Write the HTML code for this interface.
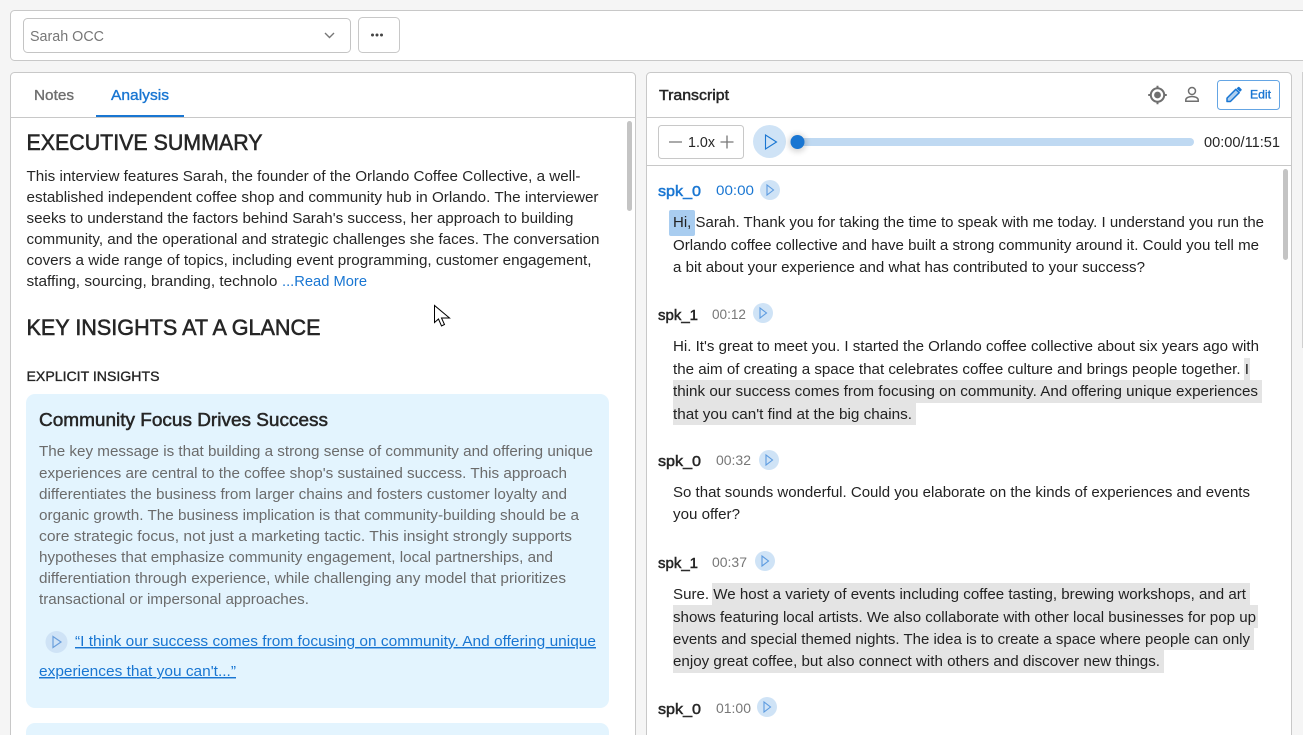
<!DOCTYPE html>
<html lang="en"><head><meta charset="utf-8"><title>Transcript</title>
<style>
html,body{margin:0;padding:0;width:1303px;height:735px;overflow:hidden;background:#f5f5f5}
svg{display:block;position:absolute;left:0;top:0}
text{font-family:"Liberation Sans",Arial,sans-serif;white-space:pre}
.b{font-size:14.6px;fill:#262626}
.g{font-size:14.6px;fill:#6b6b6b}
.t{font-size:14.6px;fill:#222}
.l{font-size:14.6px;fill:#1976d2}
.h{font-size:22px;fill:#262626;stroke:#262626;stroke-width:.55px}
.s{font-size:15px;fill:#262626;stroke:#262626;stroke-width:.5px}
.tm{font-size:14px;fill:#777}
.m{font-size:14.5px;stroke-width:.35px}
</style></head><body>
<svg width="1303" height="735" viewBox="0 0 1303 735" xmlns="http://www.w3.org/2000/svg">
<defs><filter id="sh" x="-100%" y="-100%" width="300%" height="300%"><feGaussianBlur stdDeviation="3"/></filter></defs>
<!-- top bar -->
<rect x="10.5" y="10.5" width="1310" height="50" rx="4" fill="#fff" stroke="#c8c8c8"/>
<rect x="23.5" y="18.5" width="327" height="34" rx="4" fill="#fff" stroke="#c4c4c4"/>
<text x="30" y="41" font-size="14.5" fill="#777" textLength="74" lengthAdjust="spacingAndGlyphs">Sarah OCC</text>
<path d="M325 33l4.500 4.500 4.500-4.500" fill="none" stroke="#777" stroke-width="1.400"/>
<rect x="358.500" y="17.500" width="41" height="35" rx="4" fill="#fff" stroke="#c8c8c8"/>
<g fill="#444"><circle cx="372.500" cy="35" r="1.500"/><circle cx="377" cy="35" r="1.500"/><circle cx="381.500" cy="35" r="1.500"/></g>

<!-- left panel -->
<rect x="10.500" y="72.500" width="625" height="680" rx="4" fill="#fff" stroke="#c8c8c8"/>
<line x1="11" y1="117.500" x2="635" y2="117.500" stroke="#c8c8c8"/>
<text x="34" y="100" class="m" fill="#6e6e6e" stroke="#6e6e6e" textLength="40" lengthAdjust="spacingAndGlyphs">Notes</text>
<text x="111" y="100" class="m" fill="#1976d2" stroke="#1976d2" textLength="58" lengthAdjust="spacingAndGlyphs">Analysis</text>
<rect x="96" y="115" width="88" height="2" fill="#1976d2"/>
<rect x="627" y="121" width="5" height="90" rx="2.500" fill="#c4c4c4"/>

<text x="26.500" y="150" class="h" textLength="236" lengthAdjust="spacingAndGlyphs">EXECUTIVE SUMMARY</text>
<text x="26.500" y="181" class="b" textLength="554" lengthAdjust="spacingAndGlyphs">This interview features Sarah, the founder of the Orlando Coffee Collective, a well-</text>
<text x="26.500" y="202" class="b" textLength="572" lengthAdjust="spacingAndGlyphs">established independent coffee shop and community hub in Orlando. The interviewer</text>
<text x="26.500" y="223" class="b" textLength="547" lengthAdjust="spacingAndGlyphs">seeks to understand the factors behind Sarah's success, her approach to building</text>
<text x="26.500" y="244" class="b" textLength="573" lengthAdjust="spacingAndGlyphs">community, and the operational and strategic challenges she faces. The conversation</text>
<text x="26.500" y="265" class="b" textLength="565" lengthAdjust="spacingAndGlyphs">covers a wide range of topics, including event programming, customer engagement,</text>
<text x="26.500" y="286" class="b" textLength="251" lengthAdjust="spacingAndGlyphs">staffing, sourcing, branding, technolo</text>
<text x="282" y="286" class="l" textLength="85" lengthAdjust="spacingAndGlyphs">...Read More</text>

<text x="26.500" y="335" class="h" textLength="294" lengthAdjust="spacingAndGlyphs">KEY INSIGHTS AT A GLANCE</text>
<text x="26.500" y="381" font-size="14" fill="#262626" stroke="#262626" stroke-width=".35" textLength="133" lengthAdjust="spacingAndGlyphs">EXPLICIT INSIGHTS</text>

<rect x="26" y="394" width="583" height="314" rx="9" fill="#e3f4fe"/>
<rect x="26" y="723" width="583" height="40" rx="9" fill="#e3f4fe"/>
<text x="39" y="426" font-size="18" fill="#262626" stroke="#262626" stroke-width=".5" textLength="289" lengthAdjust="spacingAndGlyphs">Community Focus Drives Success</text>
<text x="39" y="456" class="g" textLength="554" lengthAdjust="spacingAndGlyphs">The key message is that building a strong sense of community and offering unique</text>
<text x="39" y="478" class="g" textLength="528" lengthAdjust="spacingAndGlyphs">experiences are central to the coffee shop's sustained success. This approach</text>
<text x="39" y="499" class="g" textLength="528" lengthAdjust="spacingAndGlyphs">differentiates the business from larger chains and fosters customer loyalty and</text>
<text x="39" y="520" class="g" textLength="540" lengthAdjust="spacingAndGlyphs">organic growth. The business implication is that community-building should be a</text>
<text x="39" y="541" class="g" textLength="533" lengthAdjust="spacingAndGlyphs">core strategic focus, not just a marketing tactic. This insight strongly supports</text>
<text x="39" y="562" class="g" textLength="514" lengthAdjust="spacingAndGlyphs">hypotheses that emphasize community engagement, local partnerships, and</text>
<text x="39" y="583" class="g" textLength="527" lengthAdjust="spacingAndGlyphs">differentiation through experience, while challenging any model that prioritizes</text>
<text x="39" y="604" class="g" textLength="270" lengthAdjust="spacingAndGlyphs">transactional or impersonal approaches.</text>

<ellipse cx="56.500" cy="642" rx="11" ry="11" fill="#cfe3f6"/>
<path d="M53 636.500v11l8-5.500z" fill="none" stroke="#6a9fdc" stroke-width="1.200"/>
<text x="75" y="646" class="l" text-decoration="underline" textLength="521" lengthAdjust="spacingAndGlyphs">“I think our success comes from focusing on community. And offering unique</text>
<text x="39" y="676" class="l" text-decoration="underline" textLength="197" lengthAdjust="spacingAndGlyphs">experiences that you can't...”</text>

<!-- cursor -->
<path d="M434.500 305.500v17l4-3.500 3 7 3-1.500-3-6.500h8z" fill="#fff" stroke="#000" stroke-width="1"/>

<!-- right panel -->
<rect x="646.500" y="72.500" width="645" height="680" rx="4" fill="#fff" stroke="#c8c8c8"/>
<line x1="647" y1="117.500" x2="1291" y2="117.500" stroke="#c8c8c8"/>
<line x1="647" y1="165.500" x2="1291" y2="165.500" stroke="#c8c8c8"/>
<rect x="1302" y="72" width="1" height="276" fill="#d0d0d0"/>
<text x="659" y="100" class="m" fill="#262626" stroke="#262626" style="stroke-width:.45px" textLength="70" lengthAdjust="spacingAndGlyphs">Transcript</text>

<!-- target icon -->
<g fill="none" stroke="#6f6f6f" stroke-width="2">
<circle cx="1157.500" cy="95" r="6.700"/>
<path d="M1157.500 85.700v2.500M1157.500 101.800v2.500M1148.200 95h2.500M1164.300 95h2.500"/>
</g>
<circle cx="1157.500" cy="95" r="3.400" fill="#6f6f6f"/>
<!-- person icon -->
<g fill="none" stroke="#6f6f6f" stroke-width="1.500">
<circle cx="1192" cy="91" r="3.500"/>
<path d="M1185.800 101.300v-1.500c0-2.100 3.700-3.300 6.200-3.300s6.200 1.200 6.200 3.300v1.500z"/>
</g>
<!-- edit button -->
<rect x="1217.500" y="80.500" width="62" height="29" rx="3" fill="#fff" stroke="#64a5e4"/>
<path d="M1227 101.500v-3.400l8.800-8.800 3.400 3.400-8.800 8.800z" fill="#1976d2" fill-opacity=".35" stroke="#1976d2" stroke-width="1.500" stroke-linejoin="round"/>
<path d="M1236.600 88.500l1.400-1.400a1 1 0 0 1 1.400 0l2 2a1 1 0 0 1 0 1.400l-1.400 1.400z" fill="#1976d2"/>
<text x="1250" y="98.500" font-size="12" fill="#1976d2" stroke="#1976d2" stroke-width=".35" textLength="21" lengthAdjust="spacingAndGlyphs">Edit</text>

<!-- player -->
<rect x="658.500" y="125.500" width="85" height="33" rx="3" fill="#fff" stroke="#c8c8c8"/>
<path d="M669 142h13M720.500 142h13M727 135.500v13" stroke="#777" stroke-width="1.300" fill="none"/>
<text x="688" y="147" font-size="14.500" fill="#262626" textLength="27" lengthAdjust="spacingAndGlyphs">1.0x</text>
<circle cx="769.500" cy="141.500" r="16.500" fill="#cfe3f6"/>
<path d="M765.500 135v14l11-7z" fill="none" stroke="#1976d2" stroke-width="1.100"/>
<rect x="797" y="138" width="397" height="8" rx="4" fill="#bfd9f2"/>
<circle cx="797.500" cy="143" r="9" fill="#000" opacity=".16" filter="url(#sh)"/>
<circle cx="797.500" cy="142" r="7" fill="#1976d2"/>
<text x="1204" y="147" font-size="14.500" fill="#262626" textLength="76" lengthAdjust="spacingAndGlyphs">00:00/11:51</text>
<rect x="1283" y="169" width="5" height="91" rx="2.500" fill="#c4c4c4"/>

<!-- highlights -->
<rect x="669" y="210" width="26" height="26" rx="2" fill="#a9cdf0"/>
<rect x="1244" y="358" width="6" height="22" fill="#e4e4e4"/>
<rect x="673" y="380" width="589" height="23" fill="#e4e4e4"/>
<rect x="673" y="403" width="243" height="22" fill="#e4e4e4"/>
<rect x="712" y="583" width="538" height="22" fill="#e4e4e4"/>
<rect x="673" y="605" width="585" height="23" fill="#e4e4e4"/>
<rect x="673" y="628" width="581" height="22" fill="#e4e4e4"/>
<rect x="673" y="650" width="491" height="23" fill="#e4e4e4"/>

<!-- speaker 1 -->
<text x="658" y="196" class="s" style="fill:#1976d2;stroke:#1976d2" textLength="43" lengthAdjust="spacingAndGlyphs">spk_0</text>
<text x="716" y="195" class="tm" style="fill:#1976d2" textLength="38" lengthAdjust="spacingAndGlyphs">00:00</text>
<circle cx="770" cy="190" r="10" fill="#cfe3f6"/><path d="M767 185v10l6.500-5z" fill="none" stroke="#5c9be0" stroke-width="1.100"/>
<text x="673" y="227" class="t" textLength="591" lengthAdjust="spacingAndGlyphs">Hi, Sarah. Thank you for taking the time to speak with me today. I understand you run the</text>
<text x="673" y="250" class="t" textLength="586" lengthAdjust="spacingAndGlyphs">Orlando coffee collective and have built a strong community around it. Could you tell me</text>
<text x="673" y="272" class="t" textLength="472" lengthAdjust="spacingAndGlyphs">a bit about your experience and what has contributed to your success?</text>

<!-- speaker 2 -->
<text x="658" y="320" class="s" textLength="40" lengthAdjust="spacingAndGlyphs">spk_1</text>
<text x="712" y="319" class="tm" textLength="34" lengthAdjust="spacingAndGlyphs">00:12</text>
<circle cx="763" cy="313" r="10" fill="#cfe3f6"/><path d="M760 308v10l6.500-5z" fill="none" stroke="#5c9be0" stroke-width="1.100"/>
<text x="673" y="351" class="t" textLength="586" lengthAdjust="spacingAndGlyphs">Hi. It's great to meet you. I started the Orlando coffee collective about six years ago with</text>
<text x="673" y="374" class="t" textLength="576" lengthAdjust="spacingAndGlyphs">the aim of creating a space that celebrates coffee culture and brings people together. I</text>
<text x="673" y="396" class="t" textLength="585" lengthAdjust="spacingAndGlyphs">think our success comes from focusing on community. And offering unique experiences</text>
<text x="673" y="419" class="t" textLength="239" lengthAdjust="spacingAndGlyphs">that you can't find at the big chains.</text>

<!-- speaker 3 -->
<text x="658" y="466" class="s" textLength="43" lengthAdjust="spacingAndGlyphs">spk_0</text>
<text x="716" y="465" class="tm" textLength="35" lengthAdjust="spacingAndGlyphs">00:32</text>
<circle cx="769" cy="460" r="10" fill="#cfe3f6"/><path d="M766 455v10l6.500-5z" fill="none" stroke="#5c9be0" stroke-width="1.100"/>
<text x="673" y="497" class="t" textLength="577" lengthAdjust="spacingAndGlyphs">So that sounds wonderful. Could you elaborate on the kinds of experiences and events</text>
<text x="673" y="519" class="t" textLength="67" lengthAdjust="spacingAndGlyphs">you offer?</text>

<!-- speaker 4 -->
<text x="658" y="568" class="s" textLength="40" lengthAdjust="spacingAndGlyphs">spk_1</text>
<text x="712" y="567" class="tm" textLength="35" lengthAdjust="spacingAndGlyphs">00:37</text>
<circle cx="765" cy="561" r="10" fill="#cfe3f6"/><path d="M762 556v10l6.500-5z" fill="none" stroke="#5c9be0" stroke-width="1.100"/>
<text x="673" y="599" class="t" textLength="573" lengthAdjust="spacingAndGlyphs">Sure. We host a variety of events including coffee tasting, brewing workshops, and art</text>
<text x="673" y="622" class="t" textLength="583" lengthAdjust="spacingAndGlyphs">shows featuring local artists. We also collaborate with other local businesses for pop up</text>
<text x="673" y="644" class="t" textLength="577" lengthAdjust="spacingAndGlyphs">events and special themed nights. The idea is to create a space where people can only</text>
<text x="673" y="666" class="t" textLength="487" lengthAdjust="spacingAndGlyphs">enjoy great coffee, but also connect with others and discover new things.</text>

<!-- speaker 5 -->
<text x="658" y="714" class="s" textLength="43" lengthAdjust="spacingAndGlyphs">spk_0</text>
<text x="716" y="713" class="tm" textLength="35" lengthAdjust="spacingAndGlyphs">01:00</text>
<circle cx="767" cy="707" r="10" fill="#cfe3f6"/><path d="M764 702v10l6.500-5z" fill="none" stroke="#5c9be0" stroke-width="1.100"/>
</svg>
</body></html>
